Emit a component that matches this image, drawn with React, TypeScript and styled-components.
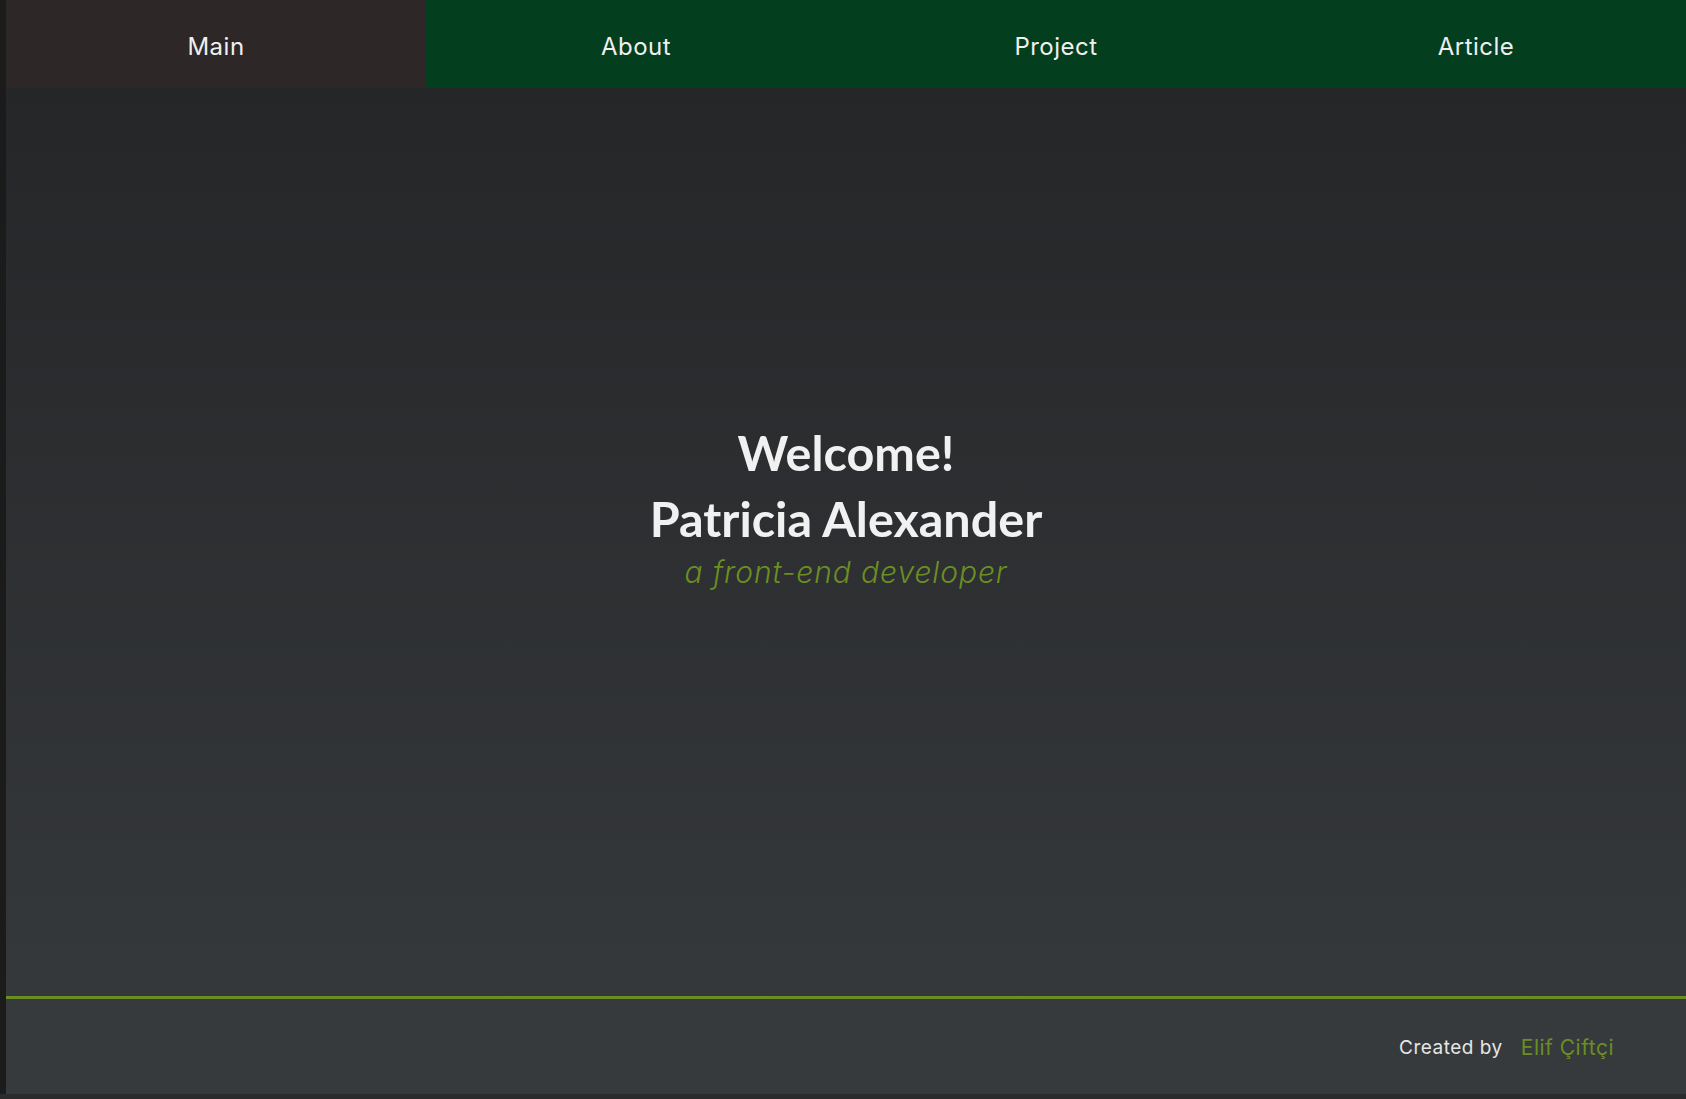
import React from "react";
import styled, { createGlobalStyle } from "styled-components";

const Global = createGlobalStyle`
  html, body { margin: 0; padding: 0; height: 100%; }
  body { background: #2b2b2b; font-family: "Inter", "Liberation Sans", sans-serif; }
  #root { height: 100%; }
  * { box-sizing: border-box; }
`;

const Frame = styled.div`
  display: flex;
  flex-direction: column;
  height: 100vh;
`;

const Row = styled.div`
  display: flex;
  flex: 1;
  min-height: 0;
`;

const SideStrip = styled.div`
  width: 6px;
  background: #1b1b1b;
`;

const Page = styled.div`
  flex: 1;
  display: flex;
  flex-direction: column;
`;

const Nav = styled.nav`
  display: grid;
  grid-template-columns: repeat(4, 1fr);
  height: 88px;
`;

const NavItem = styled.a<{ $active?: boolean }>`
  display: flex;
  align-items: center;
  justify-content: center;
  background: ${(p) => (p.$active ? "#2d2728" : "#033e1e")};
  color: #efefef;
  font-family: "Inter", "Liberation Sans", sans-serif;
  font-size: 24px;
  font-weight: 400;
  letter-spacing: 0.5px;
  text-decoration: none;
  padding-top: 4px;
`;

const Hero = styled.main`
  flex: 1;
  display: flex;
  flex-direction: column;
  align-items: center;
  justify-content: center;
  padding-bottom: 74px;
  background: linear-gradient(180deg, #252628 0%, #35383b 100%);
`;

const Title = styled.h1`
  margin: 0;
  font-family: "Lato", "Liberation Sans", sans-serif;
  font-weight: 700;
  font-size: 48.5px;
  line-height: 66px;
  color: #f1f1f1;
  text-align: center;
`;

const Subtitle = styled.p`
  margin: 1px 0 0;
  font-family: "Inter", "Liberation Sans", sans-serif;
  font-style: italic;
  font-weight: 300;
  font-size: 30px;
  letter-spacing: 0.9px;
  line-height: 40px;
  color: #6b8e23;
`;

const Footer = styled.footer`
  height: 98px;
  border-top: 3px solid #6b8e23;
  background: #373a3d;
  display: flex;
  align-items: center;
  justify-content: flex-end;
  gap: 18px;
  padding-right: 72px;
  padding-top: 2px;
`;

const Credit = styled.span`
  font-family: "Inter", "Liberation Sans", sans-serif;
  font-size: 19px;
  letter-spacing: 0.5px;
  color: #e6e6e6;
`;

const Author = styled.span`
  font-family: "Inter", "Liberation Sans", sans-serif;
  font-size: 21px;
  letter-spacing: 0.5px;
  color: #6b8e23;
`;

const BottomStrip = styled.div`
  height: 5px;
  background: #2b2b2b;
`;

export default function App() {
  return (
    <>
      <Global />
      <Frame>
        <Row>
          <SideStrip />
          <Page>
            <Nav>
              <NavItem $active>Main</NavItem>
              <NavItem>About</NavItem>
              <NavItem>Project</NavItem>
              <NavItem>Article</NavItem>
            </Nav>
            <Hero>
              <Title>
                Welcome!
                <br />
                Patricia Alexander
              </Title>
              <Subtitle>a front-end developer</Subtitle>
            </Hero>
            <Footer>
              <Credit>Created by</Credit>
              <Author>Elif Çiftçi</Author>
            </Footer>
          </Page>
        </Row>
        <BottomStrip />
      </Frame>
    </>
  );
}
